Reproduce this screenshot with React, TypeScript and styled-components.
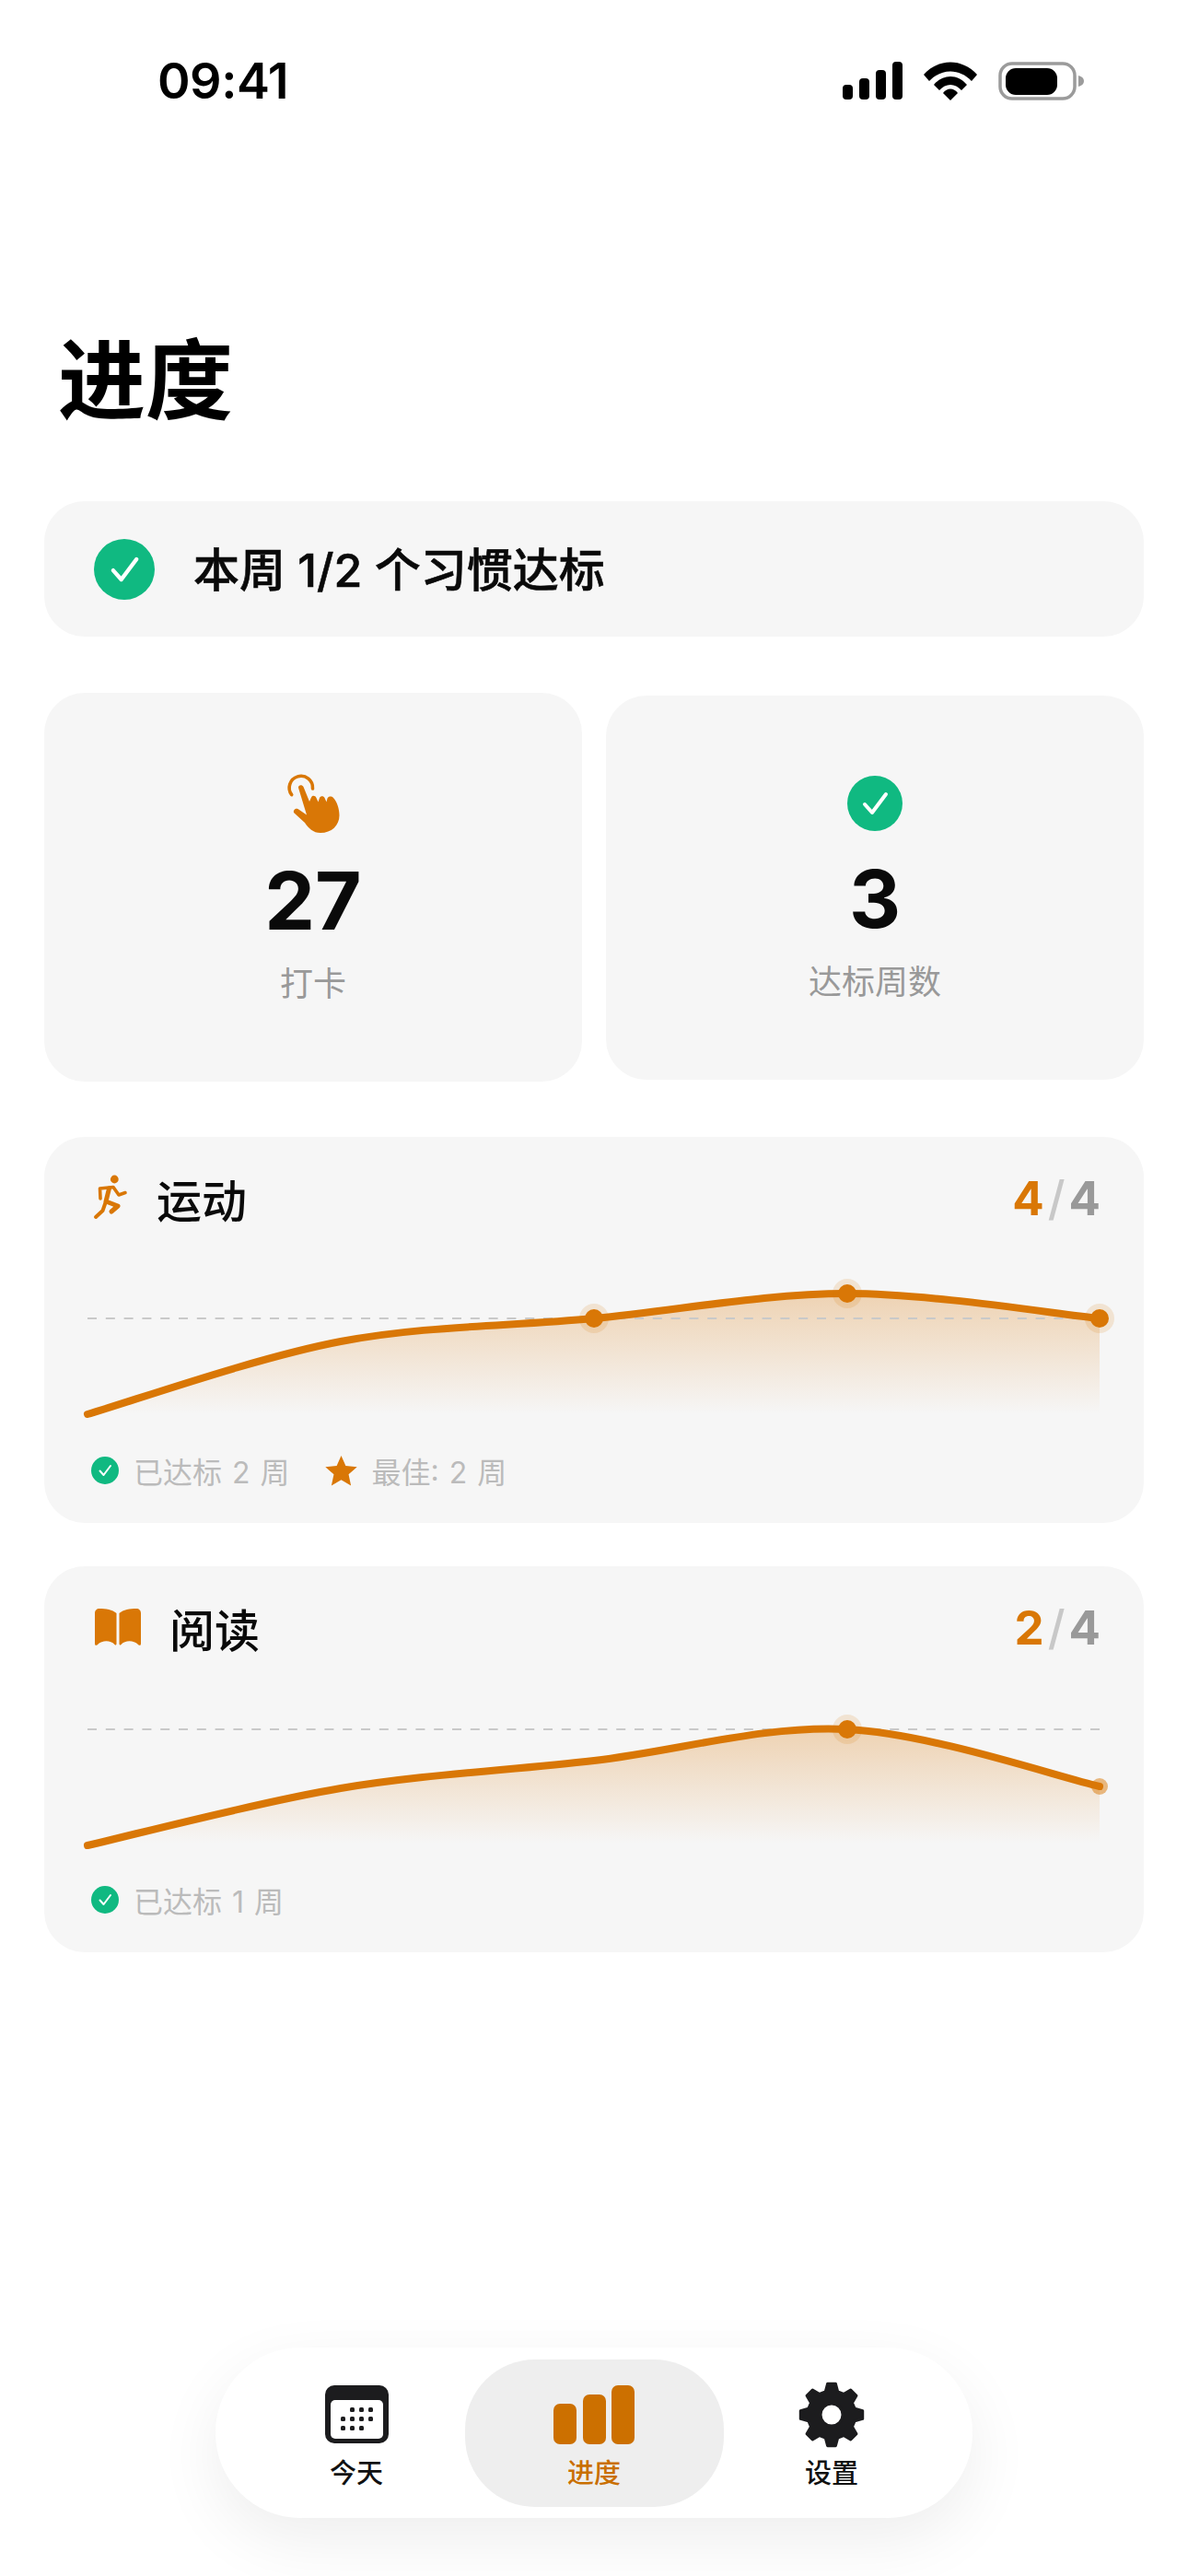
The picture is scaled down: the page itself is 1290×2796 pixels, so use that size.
import React from "react";
import styled, { createGlobalStyle } from "styled-components";

const ORANGE = "#d97706";
const GREEN = "#10b981";
const CARD = "#f6f6f6";

const GlobalStyle = createGlobalStyle`
  html, body { margin: 0; padding: 0; background: #fff; }
  body { font-family: Inter, "Noto Sans CJK SC", sans-serif; color: #0a0a0a; }
  * { box-sizing: border-box; }
`;

const Page = styled.div`
  width: 1290px;
  height: 2796px;
  display: flex;
  flex-direction: column;
  overflow: hidden;
`;

const StatusBar = styled.div`
  height: 176px;
  display: flex;
  align-items: center;
  justify-content: space-between;
  padding: 0 113px 0 171px;
`;

const Time = styled.div`
  font-size: 54px;
  font-weight: 600;
  line-height: 1;
  letter-spacing: -0.5px;
  color: #000;
`;

const StatusIcons = styled.div`
  display: flex;
  align-items: center;
  gap: 23px;
`;

const Title = styled.h1`
  margin: 183px 0 75px 63px;
  font-size: 95px;
  font-weight: 700;
  line-height: 110px;
  color: #000;
`;

const Content = styled.main`
  padding: 0 48px;
  display: flex;
  flex-direction: column;
`;

const Banner = styled.div`
  height: 147px;
  background: ${CARD};
  border-radius: 44px;
  display: flex;
  align-items: center;
  gap: 42px;
  padding-left: 54px;
  font-size: 50px;
  font-weight: 500;
`;

const BannerText = styled.span`
  margin-top: -5px;
  -webkit-text-stroke: 0.6px #0a0a0a;
`;

const StatsGrid = styled.div`
  height: 422px;
  margin-top: 61px;
  display: grid;
  grid-template-columns: 1fr 1fr;
  gap: 26px;
  align-items: center;
`;

const StatCard = styled.div`
  background: ${CARD};
  border-radius: 44px;
  padding: 87px 0 83px;
  display: flex;
  flex-direction: column;
  align-items: center;
`;

const StatIcon = styled.div<{ $h: number }>`
  height: ${(p) => p.$h}px;
  display: flex;
  align-items: center;
  justify-content: center;
`;

const StatValue = styled.div`
  margin-top: 28px;
  font-size: 87px;
  line-height: 92px;
  font-weight: 700;
`;

const StatLabel = styled.div`
  margin-top: 21px;
  font-size: 36px;
  line-height: 46px;
  color: #999;
`;

const HabitCard = styled.section<{ $gap: number }>`
  margin-top: ${(p) => p.$gap}px;
  height: 419px;
  background: ${CARD};
  border-radius: 44px;
  padding: 36px 48px 0 47px;
`;

const HabitHeader = styled.div`
  height: 60px;
  display: flex;
  align-items: center;
  justify-content: space-between;
`;

const HabitName = styled.div<{ $inset: number }>`
  display: flex;
  align-items: center;
  gap: 30px;
  padding-left: ${(p) => p.$inset}px;
  font-size: 49px;
  font-weight: 500;
`;

const Score = styled.div`
  display: flex;
  align-items: center;
  margin-right: -1px;
  font-size: 51px;
  font-weight: 700;
  color: #999;
`;

const ScoreDone = styled.span`
  color: ${ORANGE};
`;

const ScoreSlash = styled.span`
  color: #c8c8c8;
  font-weight: 500;
  margin: 0 4px;
`;

const ChartBox = styled.svg`
  display: block;
  margin-top: 45px;
  overflow: visible;
`;

const Footer = styled.div`
  margin-top: 29px;
  height: 44px;
  display: flex;
  align-items: center;
  gap: 38px;
  padding-left: 4px;
  font-size: 32px;
  color: #bbb;
`;

const FooterItem = styled.div`
  display: flex;
  align-items: center;
  gap: 16px;
  word-spacing: 2px;
`;

const Nav = styled.nav`
  margin-top: auto;
  margin-bottom: 63px;
  align-self: center;
  width: 822px;
  height: 185px;
  background: #fff;
  border-radius: 92px;
  box-shadow: 0 24px 70px rgba(0, 0, 0, 0.07);
  display: flex;
  align-items: center;
  padding: 0 24px;
`;

const NavItem = styled.div<{ $active?: boolean }>`
  width: ${(p) => (p.$active ? 281 : 258)}px;
  margin: ${(p) => (p.$active ? "0 -11.5px" : "0")};
  height: 160px;
  border-radius: 76px;
  background: ${(p) => (p.$active ? "#eeeeee" : "transparent")};
  color: ${(p) => (p.$active ? "#c96f00" : "#111")};
  display: flex;
  flex-direction: column;
  align-items: center;
  font-size: 29px;
  font-weight: 500;
`;

const NavIcon = styled.div`
  height: 106px;
  padding-top: 14px;
  display: flex;
  align-items: center;
  justify-content: center;
`;

const NavLabel = styled.div`
  line-height: 36px;
`;

const Bars = styled.div`
  display: flex;
  align-items: flex-end;
  gap: 6.5px;
`;

const Bar = styled.div<{ $h: number }>`
  width: 25px;
  height: ${(p) => p.$h}px;
  border-radius: 7px;
  background: #cc7000;
`;

const Signal = () => (
  <svg width="65" height="42" viewBox="0 0 65 42">
    <rect x="0" y="25" width="11" height="16" rx="4" />
    <rect x="18" y="18" width="11" height="23" rx="4" />
    <rect x="36" y="9" width="11" height="32" rx="4" />
    <rect x="54" y="0" width="11" height="41" rx="4" />
  </svg>
);

const Wifi = () => (
  <svg width="58" height="42" viewBox="0 0 58 42">
    <path d="M0 14 C16 -4 42 -4 58 14 L52 21 C39 7 19 7 6 21 Z" />
    <path d="M11 25 C21 13 37 13 47 25 L41 31 C34 23 24 23 17 31 Z" />
    <path d="M21 34 C25 28 33 28 37 34 L29 42 Z" />
  </svg>
);

const Battery = () => (
  <svg width="93" height="42" viewBox="0 0 93 42">
    <rect x="2" y="2" width="81" height="38" rx="13" fill="none" stroke="#9b9b9b" strokeWidth="3.5" />
    <rect x="8" y="7" width="56" height="29" rx="11" fill="#000" />
    <path d="M87 15 C91 16 93 18 93 21 C93 24 91 26 87 27 Z" fill="#9b9b9b" />
  </svg>
);

const CheckBadge = ({ size }: { size: number }) => (
  <svg width={size} height={size} viewBox="0 0 60 60">
    <circle cx="30" cy="30" r="30" fill={GREEN} />
    <path d="M19 31 L27 40 L42 20" fill="none" stroke="#fff" strokeWidth="4" strokeLinecap="round" strokeLinejoin="round" />
  </svg>
);

const HandTap = () => (
  <svg width="60" height="67" viewBox="40 28 60 67">
    <path d="M46.7 52.7 A12.7 12.7 0 1 1 69.5 46" fill="none" stroke={ORANGE} strokeWidth="3.6" strokeLinecap="round" />
    <path
      d="M54 45 C53.5 42 58 41 59.5 44 L66 60 L68 55.5 C69 53 72.5 53.5 73.5 56 L75.5 60.5 L77 56 C78 53.5 81.5 53.5 82.5 56 L84.5 60.5 L85.5 56.5 C87 54 90 54 92 56 C96 60 98.5 68 98.5 75 C98.5 86 90 94 78 94 C70 94 65 89 61 83 L49.5 72.5 C47.5 70 50.5 66.5 53.5 68 L63 74.5 Z"
      fill={ORANGE}
    />
  </svg>
);

const Runner = () => (
  <svg width="40" height="50" viewBox="20 26 40 50" fill="none" stroke={ORANGE} strokeWidth="3.6" strokeLinecap="round" strokeLinejoin="round">
    <circle cx="44.3" cy="31" r="4.4" fill={ORANGE} stroke="none" />
    <path d="M29 52 L28.5 41 L43 39.5 L49 48 L56 45.5" />
    <path d="M38.5 41 L35 55 L48 60 L41 66" strokeWidth="5" />
    <path d="M35 55 L31.5 65 L24 72" strokeWidth="4" />
  </svg>
);

const Star = () => (
  <svg width="35" height="33" viewBox="0 0 24 23">
    <path d="M12 0 L15.4 7.7 L24 8.6 L17.6 14.2 L19.4 22.6 L12 18.3 L4.6 22.6 L6.4 14.2 L0 8.6 L8.6 7.7 Z" fill={ORANGE} />
  </svg>
);

const Book = () => (
  <svg width="52" height="40" viewBox="0 0 52 40" fill={ORANGE}>
    <path d="M24.5 5 C20 1 13 0 6 0 C3 0 1 2 1 5 L1 38 C1 40 2.5 40.5 4 39 C9 34 18 34 22.5 39 C23.5 40 24.5 39.5 24.5 38 Z" />
    <path d="M27.5 5 C32 1 39 0 46 0 C49 0 51 2 51 5 L51 38 C51 40 49.5 40.5 48 39 C43 34 34 34 29.5 39 C28.5 40 27.5 39.5 27.5 38 Z" />
  </svg>
);

const Calendar = () => (
  <svg width="69" height="63" viewBox="0 0 69 63">
    <rect width="69" height="63" rx="10" fill="#1c1c1e" />
    <rect x="6" y="16" width="57" height="42" rx="5" fill="#fff" />
    {[
      [26, 24], [36, 24], [46, 24], [16, 34], [26, 34], [36, 34], [46, 34], [16, 44], [26, 44], [36, 44],
    ].map(([x, y]) => (
      <rect key={`${x}-${y}`} x={x + 1} y={y} width="5" height="5" rx="1.5" fill="#1c1c1e" />
    ))}
  </svg>
);

// eight toothed gear, outer radius 36
const gearPath = (() => {
  const pts: string[] = [];
  for (let i = 0; i < 8; i++) {
    const a = (i * Math.PI) / 4 - Math.PI / 2;
    const pt = (r: number, off: number) =>
      `${(36 + r * Math.cos(a + off)).toFixed(2)} ${(36 + r * Math.sin(a + off)).toFixed(2)}`;
    pts.push(pt(26, -0.26), pt(34, -0.13), pt(34, 0.13), pt(26, 0.26));
  }
  return `M${pts.join(" L")} Z M36 24 A12 12 0 1 0 36 48 A12 12 0 1 0 36 24 Z`;
})();

const Gear = () => (
  <svg width="72" height="72" viewBox="0 0 72 72">
    <path d={gearPath} fill="#1c1c1e" fillRule="evenodd" stroke="#1c1c1e" strokeWidth="3" strokeLinejoin="round" />
  </svg>
);

type Dot = { i: number; faded?: boolean };

const smooth = (xs: number[], ys: number[]) => {
  let d = `M${xs[0]} ${ys[0]}`;
  for (let i = 0; i < xs.length - 1; i++) {
    const x0 = xs[Math.max(i - 1, 0)];
    const y0 = ys[Math.max(i - 1, 0)];
    const x3 = xs[Math.min(i + 2, xs.length - 1)];
    const y3 = ys[Math.min(i + 2, xs.length - 1)];
    const c1x = xs[i] + (xs[i + 1] - x0) / 6;
    const c1y = ys[i] + (ys[i + 1] - y0) / 6;
    const c2x = xs[i + 1] - (x3 - xs[i]) / 6;
    const c2y = ys[i + 1] - (y3 - ys[i]) / 6;
    d += ` C${c1x} ${c1y} ${c2x} ${c2y} ${xs[i + 1]} ${ys[i + 1]}`;
  }
  return d;
};

const XS = [0, 275, 550, 825, 1099];

const Chart = ({ id, ys, goal, dots }: { id: string; ys: number[]; goal: number; dots: Dot[] }) => {
  const line = smooth(XS, ys);
  return (
    <ChartBox width="1099" height="170" viewBox="0 0 1099 170">
      <defs>
        <linearGradient id={id} gradientUnits="userSpaceOnUse" x1="0" y1={Math.min(...ys)} x2="0" y2="160">
          <stop offset="0" stopColor={ORANGE} stopOpacity="0.28" />
          <stop offset="1" stopColor={ORANGE} stopOpacity="0" />
        </linearGradient>
      </defs>
      <path d={`${line} L1099 162 L0 162 Z`} fill={`url(#${id})`} />
      <line x1="0" x2="1099" y1={goal} y2={goal} stroke="#c9c9c9" strokeWidth="2" strokeDasharray="10 9.8" />
      <path d={line} fill="none" stroke={ORANGE} strokeWidth="8" strokeLinecap="round" />
      {dots.map((dot) =>
        dot.faded ? (
          <circle key={dot.i} cx={XS[dot.i]} cy={ys[dot.i]} r="9" fill={ORANGE} opacity="0.5" />
        ) : (
          <g key={dot.i}>
            <circle cx={XS[dot.i]} cy={ys[dot.i]} r="16" fill={ORANGE} opacity="0.15" />
            <circle cx={XS[dot.i]} cy={ys[dot.i]} r="10" fill={ORANGE} />
          </g>
        )
      )}
    </ChartBox>
  );
};

const App = () => {
  return (
    <Page>
      <GlobalStyle />
      <StatusBar>
        <Time>09:41</Time>
        <StatusIcons>
          <Signal />
          <Wifi />
          <Battery />
        </StatusIcons>
      </StatusBar>
      <Title>进度</Title>
      <Content>
        <Banner>
          <CheckBadge size={66} />
          <BannerText>本周 1/2 个习惯达标</BannerText>
        </Banner>
        <StatsGrid>
          <StatCard>
            <StatIcon $h={65}>
              <HandTap />
            </StatIcon>
            <StatValue>27</StatValue>
            <StatLabel>打卡</StatLabel>
          </StatCard>
          <StatCard>
            <StatIcon $h={60}>
              <CheckBadge size={60} />
            </StatIcon>
            <StatValue>3</StatValue>
            <StatLabel>达标周数</StatLabel>
          </StatCard>
        </StatsGrid>
        <HabitCard $gap={60}>
          <HabitHeader>
            <HabitName $inset={5}>
              <Runner />
              运动
            </HabitName>
            <Score>
              <ScoreDone>4</ScoreDone>
              <ScoreSlash>/</ScoreSlash>4
            </Score>
          </HabitHeader>
          <Chart id="run" ys={[160, 81, 56, 29, 56]} goal={56} dots={[{ i: 2 }, { i: 3 }, { i: 4 }]} />
          <Footer>
            <FooterItem>
              <CheckBadge size={30} />
              已达标 2 周
            </FooterItem>
            <FooterItem>
              <Star />
              最佳: 2 周
            </FooterItem>
          </Footer>
        </HabitCard>
        <HabitCard $gap={47}>
          <HabitHeader>
            <HabitName $inset={7}>
              <Book />
              阅读
            </HabitName>
            <Score>
              <ScoreDone>2</ScoreDone>
              <ScoreSlash>/</ScoreSlash>4
            </Score>
          </HabitHeader>
          <Chart id="read" ys={[162, 100, 70, 36, 98]} goal={36} dots={[{ i: 3 }, { i: 4, faded: true }]} />
          <Footer>
            <FooterItem>
              <CheckBadge size={30} />
              已达标 1 周
            </FooterItem>
          </Footer>
        </HabitCard>
      </Content>
      <Nav>
        <NavItem>
          <NavIcon>
            <Calendar />
          </NavIcon>
          <NavLabel>今天</NavLabel>
        </NavItem>
        <NavItem $active>
          <NavIcon>
            <Bars>
              <Bar $h={44} />
              <Bar $h={54} />
              <Bar $h={64} />
            </Bars>
          </NavIcon>
          <NavLabel>进度</NavLabel>
        </NavItem>
        <NavItem>
          <NavIcon>
            <Gear />
          </NavIcon>
          <NavLabel>设置</NavLabel>
        </NavItem>
      </Nav>
    </Page>
  );
};

export default App;
